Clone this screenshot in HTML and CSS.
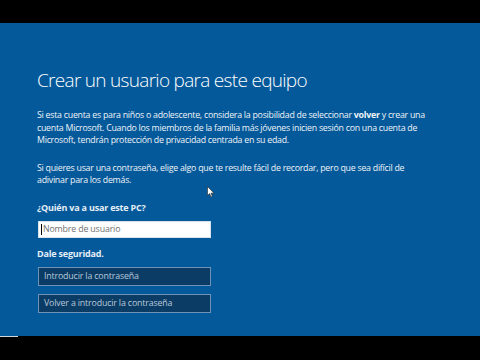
FILE: index.html
```html
<!DOCTYPE html>
<html lang="es">
<head>
    <meta charset="UTF-8">
    <title>Crear un usuario</title>
    <link rel="stylesheet" href="styles.css">
</head>
<body>

<div class="screen">
    <div class="setup">
        <h1 class="title">Crear un usuario para este equipo</h1>
        <p class="text">Si esta cuenta es para niños o adolescente, considera la posibilidad de seleccionar <b>volver</b> y crear una cuenta Microsoft. Cuando los miembros de la familia más jóvenes inicien sesión con una cuenta de Microsoft, tendrán protección de privacidad centrada en su edad.</p>
        <p class="text">Si quieres usar una contraseña, elige algo que te resulte fácil de recordar, pero que sea difícil de adivinar para los demás.</p>

        <h3 class="label">¿Quién va a usar este PC?</h3>
        <div class="field field-user"><span class="caret"></span>Nombre de usuario</div>

        <h3 class="label label-sec">Dale seguridad.</h3>
        <div class="field field-pass">Introducir la contraseña</div>
        <div class="field field-pass">Volver a introducir la contraseña</div>

        <svg class="pointer" width="8" height="12" viewBox="0 0 8 12">
            <path d="M0.5 0.5 L0.5 9.5 L2.6 7.6 L4 11 L5.4 10.4 L4 7.2 L7 7.2 Z" fill="#fff" stroke="#222" stroke-width="0.6"/>
        </svg>
    </div>
    <div class="progress"></div>
</div>

</body>
</html>
```

FILE: styles.css
```css
body {
    margin: 0;
    background: #000;
    font-family: 'Open Sans', 'Noto Sans', sans-serif;
}
.screen {
    width: 480px;
    height: 360px;
    padding-top: 23px;
    box-sizing: border-box;
    position: relative;
}
.setup {
    position: relative;
    height: 313px;
    background: #04599a;
    padding: 0 37px;
    box-sizing: border-box;
    overflow: hidden;
    color: #eef3f8;
}
.title {
    margin: 0;
    padding-top: 45px;
    font-size: 19px;
    font-weight: 300;
    line-height: 24px;
    letter-spacing: -0.7px;
    color: #fff;
}
.text {
    margin: 17px 0 0;
    width: 394px;
    font-size: 8.8px;
    line-height: 12.5px;
    letter-spacing: -0.25px;
}
.text + .text {
    margin-top: 15px;
}
.text b {
    font-weight: 700;
}
.label {
    margin: 15px 0 7px;
    font-size: 9px;
    line-height: 12px;
    font-weight: 700;
    letter-spacing: -0.2px;
    color: #e4eef7;
}
.label-sec {
    margin-top: 10px;
}
.field {
    width: 173px;
    height: 17px;
    margin-left: 1px;
    box-sizing: border-box;
    padding-left: 5px;
    font-size: 8.8px;
    line-height: 15px;
    letter-spacing: -0.15px;
    display: flex;
    align-items: center;
}
.field-user {
    background: #fff;
    border: 1px solid #d8e2ec;
    color: #707070;
    padding-left: 2px;
}
.caret {
    width: 1px;
    height: 11px;
    background: #000;
    margin-right: 1px;
}
.field-pass {
    height: 19px;
    background: #0a3c66;
    border: 1px solid #6f93b6;
    color: #b9c9d9;
    margin-bottom: 8px;
}
.pointer {
    position: absolute;
    left: 207px;
    top: 163px;
}
.progress {
    width: 18px;
    height: 1px;
    background: #cfd8e0;
}
```
